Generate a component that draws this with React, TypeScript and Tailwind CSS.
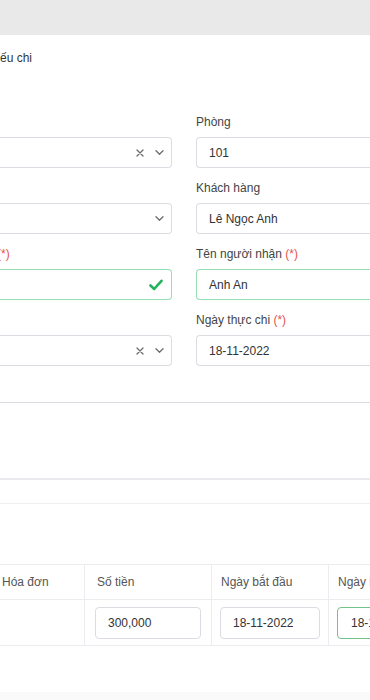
import React from "react";

const font = { fontFamily: '"Liberation Sans", Arial, sans-serif' };

function XIcon() {
  return (
    <svg width="8" height="8" viewBox="0 0 8 8" className="block">
      <path d="M1 1 L7 7 M7 1 L1 7" stroke="#6b6b72" strokeWidth="1.3" strokeLinecap="round" fill="none" />
    </svg>
  );
}

function Chevron() {
  return (
    <svg width="9" height="5" viewBox="0 0 9 5" className="block">
      <path d="M1 0.8 L4.5 4.2 L8 0.8" stroke="#6b6b72" strokeWidth="1.3" strokeLinecap="round" strokeLinejoin="round" fill="none" />
    </svg>
  );
}

function Check() {
  return (
    <svg width="14" height="12" viewBox="0 0 14 12" className="block">
      <path d="M1.5 6.5 L5.2 10 L12.5 1.8" stroke="#22b35e" strokeWidth="2.6" strokeLinecap="round" strokeLinejoin="round" fill="none" />
    </svg>
  );
}

function Req() {
  return <span className="text-[#e8534c]"> (*)</span>;
}

function LeftInput({ x, chevron, check, green }: { x?: boolean; chevron?: boolean; check?: boolean; green?: boolean }) {
  return (
    <div
      className={`h-[31px] w-[172px] border border-l-0 rounded-r-[4px] flex items-center justify-end ${
        check ? "pr-[8px]" : "pr-[7px]"
      } ${green ? "border-[#95dfb2]" : "border-[#dcdce3]"}`}
    >
      {x && (
        <div className="mr-[11px]">
          <XIcon />
        </div>
      )}
      {chevron && <Chevron />}
      {check && <Check />}
    </div>
  );
}

function RightInput({ value, green }: { value: string; green?: boolean }) {
  return (
    <div
      className={`h-[31px] border border-r-0 rounded-l-[4px] flex items-center pl-[12px] text-[12px] text-[#333] ${
        green ? "border-[#95dfb2]" : "border-[#dcdce3]"
      }`}
    >
      {value}
    </div>
  );
}

export default function App() {
  return (
    <div className="w-[370px] h-[700px] overflow-hidden bg-white flex flex-col" style={font}>
      <div className="h-[35px] bg-[#e9e9e9] shrink-0" />
      <div className="mt-[15px] h-[16px] leading-[16px] text-[12px] text-[#333]">ếu chi</div>

      <div className="mt-[48px] grid grid-cols-[172px_1fr] gap-x-[24px] gap-y-[12px]">
        {/* row 1 */}
        <div>
          <div className="h-[16px] mb-[7px]" />
          <LeftInput x chevron />
        </div>
        <div>
          <div className="h-[16px] leading-[16px] mb-[7px] text-[12px] text-[#444]">Phòng</div>
          <RightInput value="101" />
        </div>
        {/* row 2 */}
        <div>
          <div className="h-[16px] mb-[7px]" />
          <LeftInput chevron />
        </div>
        <div>
          <div className="h-[16px] leading-[16px] mb-[7px] text-[12px] text-[#444]">Khách hàng</div>
          <RightInput value="Lê Ngọc Anh" />
        </div>
        {/* row 3 */}
        <div>
          <div className="h-[16px] leading-[16px] mb-[7px] text-[12px] text-[#e8534c] -ml-[3px]">(*)</div>
          <LeftInput check green />
        </div>
        <div>
          <div className="h-[16px] leading-[16px] mb-[7px] text-[12px] text-[#444]">
            Tên người nhận
            <Req />
          </div>
          <RightInput value="Anh An" green />
        </div>
        {/* row 4 */}
        <div>
          <div className="h-[16px] mb-[7px]" />
          <LeftInput x chevron />
        </div>
        <div>
          <div className="h-[16px] leading-[16px] mb-[7px] text-[12px] text-[#444]">
            Ngày thực chi
            <Req />
          </div>
          <RightInput value="18-11-2022" />
        </div>
      </div>

      <div className="h-[37px] border-b border-[#dcdce3] shrink-0" />
      <div className="h-[77px] border-b-2 border-[#e9e9ee] shrink-0" />
      <div className="h-[24px] border-b border-[#f0f0f2] shrink-0" />
      <div className="h-[60px] shrink-0" />

      <div className="grid grid-cols-[84px_127px_117px_1fr] text-[12px] text-[#555] border-t border-[#ebebf0]">
        <div className="h-[35px] flex items-center pl-[2px] border-b border-[#ebebf0]">Hóa đơn</div>
        <div className="h-[35px] flex items-center pl-[12px] border-b border-l border-[#ebebf0]">Số tiền</div>
        <div className="h-[35px] flex items-center pl-[9px] border-b border-l border-[#ebebf0]">Ngày bắt đầu</div>
        <div className="h-[35px] flex items-center pl-[9px] border-b border-l border-[#ebebf0] whitespace-nowrap">Ngày kết thúc</div>

        <div className="h-[46px] border-b border-[#ebebf0]" />
        <div className="h-[46px] flex items-center px-[10px] border-b border-l border-[#ebebf0]">
          <div className="w-full h-[32px] border border-[#dcdce3] rounded-[4px] flex items-center pl-[12px] text-[#333]">300,000</div>
        </div>
        <div className="h-[46px] flex items-center px-[8px] border-b border-l border-[#ebebf0]">
          <div className="w-full h-[32px] border border-[#dcdce3] rounded-[4px] flex items-center pl-[12px] text-[#333]">18-11-2022</div>
        </div>
        <div className="h-[46px] flex items-center pl-[8px] border-b border-l border-[#ebebf0] overflow-hidden">
          <div className="w-[120px] shrink-0 h-[32px] border border-[#74c189] rounded-[4px] flex items-center pl-[13px] text-[#333]">18-11-2022</div>
        </div>
      </div>

      <div className="flex-1" />
      <div className="h-[8px] bg-[#fafafa] shrink-0" />
    </div>
  );
}
